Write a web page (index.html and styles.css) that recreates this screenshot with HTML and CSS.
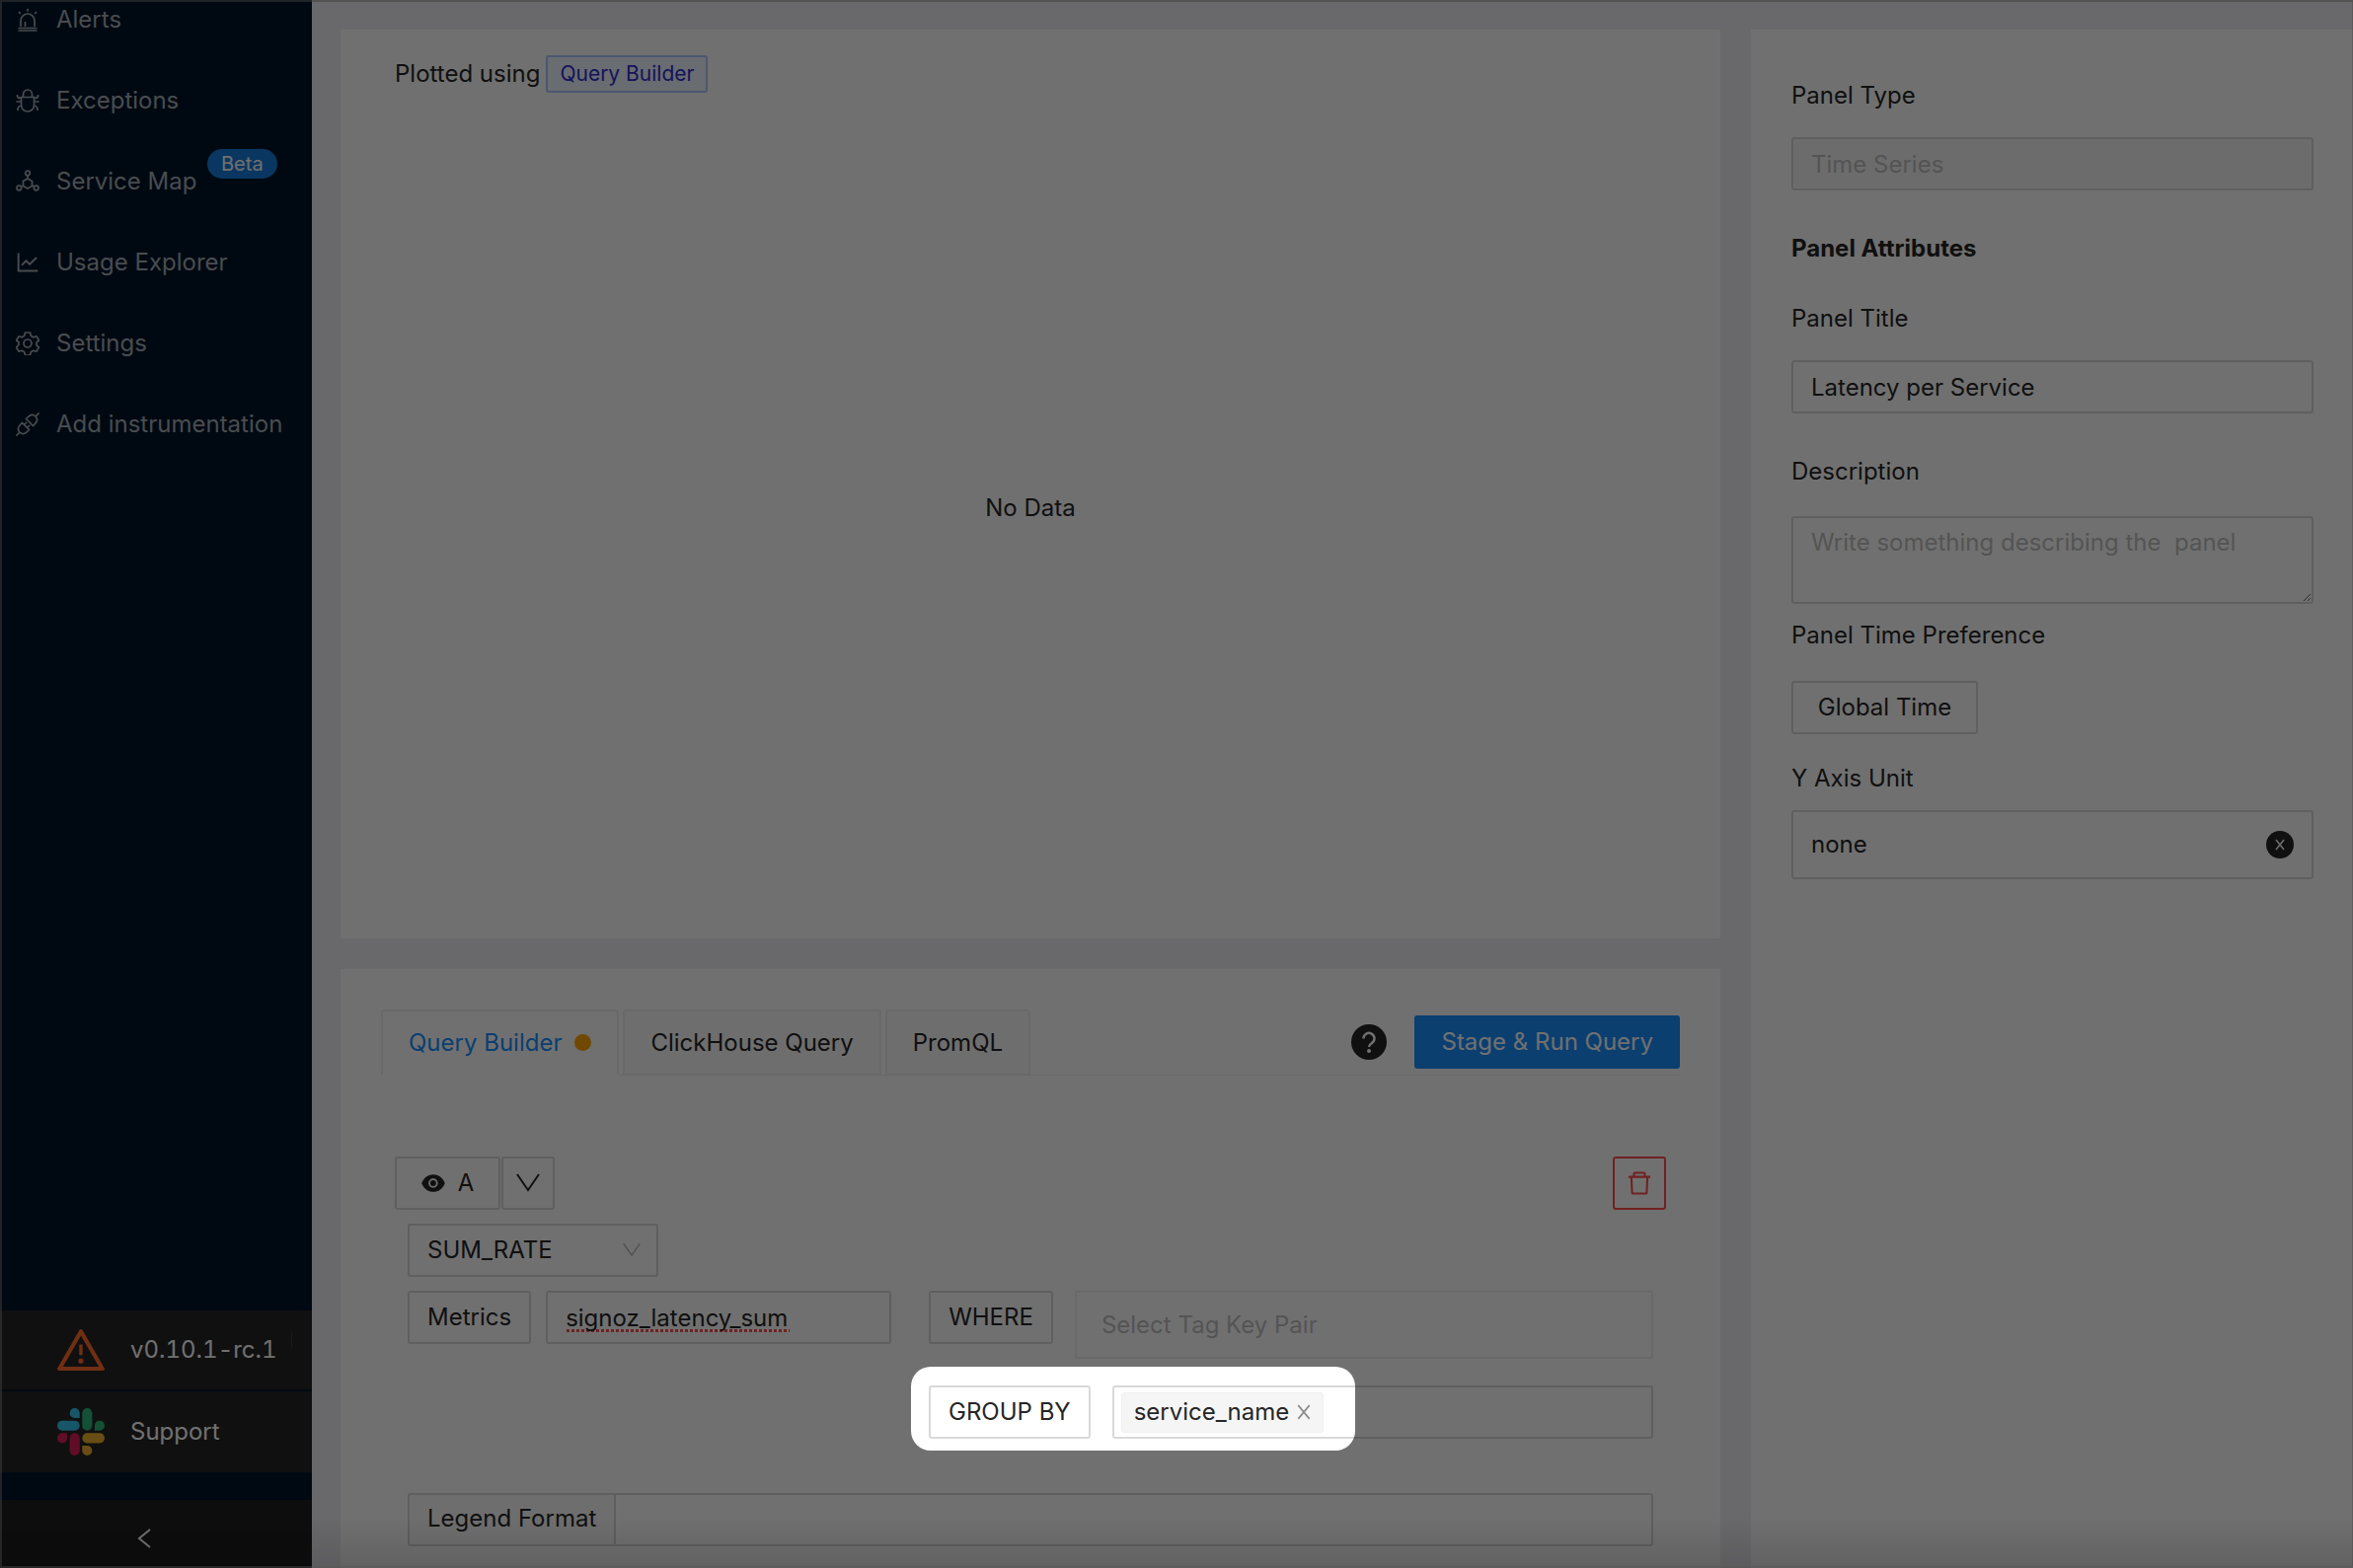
FILE: index.html
```html
<!DOCTYPE html>
<html lang="en">
<head>
<meta charset="utf-8">
<title>Edit panel</title>
<link rel="stylesheet" href="styles.css">
</head>
<body>
<div class="app">
  <aside class="sidebar">
    <nav class="nav">
      <a class="nav-item" href="#alerts">
        <svg class="nav-icon line" viewBox="0 0 24 24"><path d="M5 19v-6a7 7 0 0 1 14 0v6M2.500 20.500h19M2.500 23h19M9.500 19v-5M12 1v2.500M3 4l1.800 1.800M21 4l-1.800 1.800"/></svg>
        <span>Alerts</span>
      </a>
      <a class="nav-item" href="#exceptions">
        <svg class="nav-icon line" viewBox="0 0 24 24"><path d="M5.500 8.500h13v8a6.500 6.500 0 0 1-13 0zM7.500 8V5.500a4.500 4.500 0 0 1 9 0V8M0.500 13h5M18.500 13h5M1.500 6v1.500q0 2 4 2M22.500 6v1.500q0 2-4 2M2 22v-1.500q0-3 4-3.500M22 22v-1.500q0-3-4-3.500"/></svg>
        <span>Exceptions</span>
      </a>
      <a class="nav-item" href="#service-map">
        <svg class="nav-icon line" viewBox="0 0 24 24"><circle cx="12" cy="3.500" r="2.300"/><circle cx="3.300" cy="18.500" r="2.300"/><circle cx="20.700" cy="18.500" r="2.300"/><path d="M12 6v3M12 9l4.500 2.500v5L12 19l-4.500-2.500v-5zM7.500 16l-2.300 1.300M16.500 16l2.300 1.300"/></svg>
        <span>Service Map</span>
        <span class="badge">Beta</span>
      </a>
      <a class="nav-item" href="#usage">
        <svg class="nav-icon" viewBox="64 64 896 896"><path d="M888 792H200V168c0-4.400-3.600-8-8-8h-56c-4.400 0-8 3.600-8 8v688c0 4.400 3.600 8 8 8h752c4.400 0 8-3.600 8-8v-56c0-4.400-3.600-8-8-8zM305.800 637.700c3.100 3.100 8.100 3.100 11.300 0l138.300-137.600L583 628.500c3.100 3.100 8.200 3.100 11.300 0l275.400-275.300c3.100-3.100 3.100-8.200 0-11.300l-39.600-39.600a8.030 8.030 0 0 0-11.300 0l-230 229.900L461.400 404a8.030 8.030 0 0 0-11.300 0L266.300 586.700a8.030 8.030 0 0 0 0 11.300z"/></svg>
        <span>Usage Explorer</span>
      </a>
      <a class="nav-item" href="#settings">
        <svg class="nav-icon line" viewBox="0 0 24 24"><circle cx="12" cy="12" r="4"/><path d="M9.500 1h5l.8 3.300 2.500 1.500 3.200-1 2.400 4.200-2.400 2.200v2.600l2.400 2.200-2.400 4.200-3.200-1-2.500 1.500-.8 3.300h-5l-.8-3.300-2.500-1.500-3.200 1-2.400-4.200L3 13.300v-2.600L.600 9 3 4.800l3.200 1 2.500-1.500z" stroke-linejoin="round"/></svg>
        <span>Settings</span>
      </a>
      <a class="nav-item" href="#instrumentation">
        <svg class="nav-icon line" viewBox="0 0 24 24"><path d="M10.500 6.500l7 7 2-2q4-4 .5-7.500t-7.500.5zM20 4l3.500-3.500M6.500 10.500l7 7-2 2q-4 4-7.500.5t.5-7.500zM4 20l-3.500 3.500M8.500 12.500l2.500-2.500M11.500 15.500l2.500-2.500"/></svg>
        <span>Add instrumentation</span>
      </a>
    </nav>
    <div class="side-footer">
      <a class="foot-item" href="#version">
        <svg class="foot-icon warn" viewBox="64 64 896 896"><path d="M464 720a48 48 0 1 0 96 0 48 48 0 1 0-96 0zm16-304v184c0 4.400 3.600 8 8 8h48c4.400 0 8-3.600 8-8V416c0-4.400-3.600-8-8-8h-48c-4.400 0-8 3.600-8 8zm475.700 440l-416-720c-6.200-10.700-16.900-16-27.700-16s-21.600 5.300-27.700 16l-416 720C56 877.400 71.400 904 96 904h832c24.600 0 40-26.600 27.700-48zm-783.500-27.900L512 239.900l339.800 588.200H172.200z"/></svg>
        <span>v0.10.1-rc.1</span>
        <i class="mark"></i>
      </a>
      <a class="foot-item" href="#support">
        <svg class="foot-icon" viewBox="0 0 24 24"><path fill="#e01e5a" d="M5.042 15.165a2.528 2.528 0 0 1-2.520 2.523A2.528 2.528 0 0 1 0 15.165a2.527 2.527 0 0 1 2.522-2.520h2.520v2.520zM6.313 15.165a2.527 2.527 0 0 1 2.521-2.520 2.527 2.527 0 0 1 2.521 2.520v6.313A2.528 2.528 0 0 1 8.834 24a2.528 2.528 0 0 1-2.521-2.522v-6.313z"/><path fill="#36c5f0" d="M8.834 5.042a2.528 2.528 0 0 1-2.521-2.520A2.528 2.528 0 0 1 8.834 0a2.528 2.528 0 0 1 2.521 2.522v2.520H8.834zM8.834 6.313a2.528 2.528 0 0 1 2.521 2.521 2.528 2.528 0 0 1-2.521 2.521H2.522A2.528 2.528 0 0 1 0 8.834a2.528 2.528 0 0 1 2.522-2.521h6.312z"/><path fill="#2eb67d" d="M18.956 8.834a2.528 2.528 0 0 1 2.522-2.521A2.528 2.528 0 0 1 24 8.834a2.528 2.528 0 0 1-2.522 2.521h-2.522V8.834zM17.688 8.834a2.528 2.528 0 0 1-2.523 2.521 2.527 2.527 0 0 1-2.520-2.521V2.522A2.527 2.527 0 0 1 15.165 0a2.528 2.528 0 0 1 2.523 2.522v6.312z"/><path fill="#ecb22e" d="M15.165 18.956a2.528 2.528 0 0 1 2.523 2.522A2.528 2.528 0 0 1 15.165 24a2.527 2.527 0 0 1-2.520-2.522v-2.522h2.520zM15.165 17.688a2.527 2.527 0 0 1-2.520-2.523 2.526 2.526 0 0 1 2.520-2.520h6.313A2.527 2.527 0 0 1 24 15.165a2.528 2.528 0 0 1-2.522 2.523h-6.313z"/></svg>
        <span>Support</span>
      </a>
      <button class="collapse" type="button" aria-label="Collapse menu">
        <svg viewBox="0 0 14 20"><path d="M13 1L2 10l11 9"/></svg>
      </button>
    </div>
  </aside>

  <main class="main">
    <div class="work">
      <section class="card graph">
        <header class="plotted"><span>Plotted using</span><span class="chip">Query Builder</span></header>
        <p class="no-data">No Data</p>
      </section>

      <section class="card query">
        <div class="tabbar">
          <div class="tabs" role="tablist">
            <button class="tab active" type="button" role="tab" aria-selected="true">Query Builder<i class="dot"></i></button>
            <button class="tab" type="button" role="tab">ClickHouse Query</button>
            <button class="tab" type="button" role="tab">PromQL</button>
          </div>
          <div class="actions">
            <svg class="help" viewBox="0 0 36 36"><circle cx="18" cy="18" r="18" fill="#262626"/><path d="M12.500 14.500a5.500 5.500 0 1 1 8.500 4.500q-3 2-3 4" fill="none" stroke="#fff" stroke-width="2.500"/><circle cx="18" cy="27" r="2" fill="#fff"/></svg>
            <button class="primary" type="button">Stage &amp; Run Query</button>
          </div>
        </div>

        <form class="builder">
          <div class="row head">
            <div class="pair">
              <button class="btn name" type="button">
                <svg class="eye" viewBox="64 64 896 896"><path d="M396 512a112 112 0 1 0 224 0 112 112 0 1 0-224 0zm546.200-25.800C847.400 286.500 704.100 186 512 186c-192.200 0-335.400 100.500-430.200 300.300a60.300 60.300 0 0 0 0 51.500C176.600 737.500 319.900 838 512 838c192.200 0 335.400-100.500 430.200-300.300 7.700-16.200 7.700-35 0-51.500zM508 688c-97.200 0-176-78.800-176-176s78.800-176 176-176 176 78.800 176 176-78.800 176-176 176z"/></svg>
                A
              </button>
              <button class="btn toggle" type="button" aria-label="Collapse query">
                <svg class="down" viewBox="0 0 24 20"><path d="M1 1l11 16L23 1"/></svg>
              </button>
            </div>
            <button class="btn danger" type="button" aria-label="Delete query">
              <svg class="trash" viewBox="64 64 896 896"><path d="M360 184h304v72h72v-80c0-35.300-28.700-64-64-64H352c-35.300 0-64 28.700-64 64v80h72v-72zm504 72H160c-17.700 0-32 14.300-32 32v32c0 4.400 3.600 8 8 8h60.400l24.700 523c1.600 34.100 29.800 61 63.900 61h454c34.200 0 62.300-26.800 63.900-61l24.700-523H888c4.400 0 8-3.600 8-8v-32c0-17.700-14.300-32-32-32zM731.300 840H292.700l-24.200-512h487l-24.200 512z"/></svg>
            </button>
          </div>

          <div class="fields">
            <div class="aggregate">
              <select class="box" aria-label="Aggregate function"><option>SUM_RATE</option></select>
              <svg class="caret" viewBox="0 0 24 20"><path d="M1 1l11 16L23 1"/></svg>
            </div>
            <div class="row metric-row">
              <label class="box tagbox" for="metric">Metrics</label>
              <input class="box metric" id="metric" value="signoz_latency_sum">
              <label class="box tagbox" for="where">WHERE</label>
              <input class="where" id="where" placeholder="Select Tag Key Pair">
            </div>
            <div class="row group-row">
              <label class="box tagbox" for="group">GROUP BY</label>
              <div class="box multi">
                <span class="tag">service_name
                  <button class="tag-close" type="button" aria-label="Remove"><svg viewBox="0 0 12 14"><path d="M1 1l10 12M11 1L1 13"/></svg></button>
                </span>
                <input class="bare" id="group">
              </div>
              <div class="spotlight"></div>
            </div>
            <div class="row legend-row">
              <label class="box addon" for="legend">Legend Format</label>
              <input class="box legend" id="legend">
            </div>
          </div>
        </form>
      </section>
    </div>

    <section class="card settings">
      <label class="label" for="ptype">Panel Type</label>
      <input class="box" id="ptype" placeholder="Time Series" disabled>
      <h2 class="title">Panel Attributes</h2>
      <label class="label" for="ptitle">Panel Title</label>
      <input class="box" id="ptitle" value="Latency per Service">
      <label class="label spaced" for="pdesc">Description</label>
      <textarea class="box area" id="pdesc" placeholder="Write something describing the  panel"></textarea>
      <span class="label time">Panel Time Preference</span>
      <button class="btn global" type="button">Global Time</button>
      <label class="label unit" for="yunit">Y Axis Unit</label>
      <div class="box unit-box">
        <input class="bare" id="yunit" value="none">
        <button class="clear" type="button" aria-label="Clear"><svg viewBox="0 0 28 28"><circle cx="14" cy="14" r="14" fill="#262626"/><path d="M10 9l8 10M18 9l-8 10" stroke="#fff" stroke-width="1.500"/></svg></button>
      </div>
    </section>
  </main>
</div>
</body>
</html>
```

FILE: styles.css
```css
* { box-sizing: border-box; }

body {
  margin: 0;
  font: 24px/38px Inter, "Liberation Sans", sans-serif;
  color: #262626;
  background: #f0f0f3;
}

button, input, select, textarea { font: inherit; color: inherit; margin: 0; }
button { cursor: pointer; }
svg { display: block; }
a { color: inherit; text-decoration: none; }

.app {
  display: flex;
  height: 100vh;
  overflow: hidden;
  position: relative;
}

/* window edge */
.app::after {
  content: "";
  position: absolute;
  inset: 0;
  z-index: 20;
  pointer-events: none;
  border: 2px solid rgba(70, 70, 70, .45);
  border-right-width: 1px;
  background: linear-gradient(to top, rgba(0, 0, 0, .12), transparent 50px);
}

/* sidebar */
.sidebar {
  flex: 0 0 316px;
  display: flex;
  flex-direction: column;
  justify-content: space-between;
  background: #001529;
  color: #a6adb4;
}

.nav { margin-top: -21px; }

.nav-item {
  display: flex;
  align-items: center;
  height: 82px;
  padding-left: 16px;
  gap: 17px;
  position: relative;
}

.nav-icon { width: 24px; height: 24px; fill: currentColor; }
.nav-icon.line { fill: none; stroke: currentColor; stroke-width: 1.700; }

.badge {
  position: absolute;
  left: 210px;
  top: 8px;
  padding: 0 14px;
  border-radius: 15px;
  background: #177ddc;
  color: #fff;
  font-size: 20px;
  line-height: 30px;
}

.foot-item {
  display: flex;
  align-items: center;
  height: 82px;
  padding-left: 58px;
  gap: 26px;
  background: #262626;
  color: #fff;
  font-variant-numeric: tabular-nums;
  white-space: nowrap;
}

.foot-item:first-child { border-bottom: 2px solid #001529; }
.foot-icon { flex: none; width: 48px; height: 48px; }
.warn { fill: #ff6b2c; }
.mark { flex: none; width: 1px; height: 18px; margin: -20px 0 0 -12px; background: #a8071a; }

.collapse {
  display: flex;
  align-items: center;
  justify-content: center;
  width: 100%;
  height: 69px;
  margin-top: 28px;
  padding: 8px 24px 0 0;
  border: 0;
  background: #1f1f1f;
}

.collapse svg { width: 14px; height: 20px; fill: none; stroke: #fff; stroke-width: 2; }

/* content */
.main {
  flex: 1;
  min-width: 0;
  display: grid;
  grid-template-columns: minmax(0, 1fr) 610px;
  gap: 31px;
  padding: 30px 0 0 29px;
}

.work { display: flex; flex-direction: column; gap: 31px; min-height: 0; }
.card { background: #fff; }

.graph { flex: 0 0 921px; padding: 26px 55px; }
.plotted { display: flex; align-items: center; gap: 6px; }

.chip {
  border: 2px solid #adc6ff;
  border-radius: 3px;
  background: #f0f5ff;
  color: #2f2fd0;
  padding: 0 12px;
  font-size: 21px;
  line-height: 34px;
}

.no-data { margin: 402px 0 0; text-align: center; }

.query { flex: 1 0 auto; padding: 41px 41px 22px; }

.tabbar {
  display: flex;
  justify-content: space-between;
  height: 67px;
  border-bottom: 1px solid #f0f0f0;
}

.tabs { display: flex; gap: 4px; }

.tab {
  display: flex;
  align-items: center;
  height: 67px;
  padding: 0 26px;
  border: 2px solid #f0f0f0;
  border-radius: 3px 3px 0 0;
  background: #fafafa;
}

.tab.active { background: #fff; border-bottom-color: #fff; color: #1890ff; }
.dot { width: 17px; height: 17px; margin-left: 13px; border-radius: 50%; background: #ffa500; }

.actions { display: flex; align-items: center; gap: 28px; }
.help { width: 36px; height: 36px; }

.primary {
  height: 54px;
  padding: 0 27px;
  border: 0;
  border-radius: 3px;
  background: #1890ff;
  color: #fff;
}

.builder { padding: 82px 14px 0; }
.row { display: flex; align-items: flex-start; }
.head { justify-content: space-between; }
.pair { display: flex; gap: 1px; }

.box, .btn {
  height: 54px;
  border: 2px solid #d9d9d9;
  border-radius: 3px;
  background: #fff;
}

.btn { display: flex; align-items: center; justify-content: center; padding: 0; }
.name { width: 107px; gap: 13px; }
.toggle, .danger { width: 54px; }
.danger { border-color: #ff4d4f; }
.eye { width: 24px; height: 24px; fill: #262626; }
.down, .caret { fill: none; stroke: #262626; stroke-width: 2; }
.down { width: 24px; height: 20px; }
.trash { width: 26px; height: 26px; fill: #ff4d4f; }

.fields { padding: 14px 13px 0; }

.aggregate { position: relative; width: 254px; }
.aggregate select { width: 100%; padding: 0 18px; appearance: none; }
.caret { position: absolute; right: 18px; top: 19px; width: 18px; height: 16px; stroke: #bfbfbf; }

.tagbox { flex: none; padding: 0 18px; line-height: 50px; }
.metric-row { margin-top: 14px; }

.metric {
  width: 350px;
  margin: 0 38px 0 15px;
  padding: 0 18px;
  /* spell-check dots under the word */
  background: #fff repeating-linear-gradient(to right, #ff4d4f 0 3px, transparent 3px 5px) 19px 37px / 226px 3px no-repeat;
}

.where {
  flex: 1;
  min-width: 0;
  height: 69px;
  margin-left: 22px;
  padding: 0 25px;
  border: 2px solid #f0f0f0;
  background: #fff;
}

::placeholder { color: #bfbfbf; opacity: 1; }

.group-row { position: relative; margin: 27px 0 0 528px; }

.multi {
  flex: 1;
  min-width: 0;
  display: flex;
  align-items: center;
  margin-left: 22px;
  padding: 0 7px;
}

.tag {
  display: flex;
  align-items: center;
  gap: 8px;
  height: 41px;
  padding: 0 12px;
  border: 1px solid #f0f0f0;
  border-radius: 3px;
  background: #f5f5f5;
}

.tag-close { padding: 0; border: 0; background: none; }
.tag-close svg { width: 14px; height: 16px; fill: none; stroke: #8c8c8c; stroke-width: 1.500; }
.bare { flex: 1; min-width: 0; padding: 0; border: 0; background: none; outline: 0; }

/* tour highlight: dims all but the group-by control */
.spotlight {
  position: absolute;
  left: -18px;
  top: -19px;
  width: 450px;
  height: 85px;
  z-index: 10;
  border-radius: 20px;
  box-shadow: 0 0 0 3000px rgba(0, 0, 0, .56);
  pointer-events: none;
}

.legend-row { margin-top: 55px; }
.addon { flex: none; padding: 0 18px; line-height: 48px; border-right: 0; border-radius: 3px 0 0 3px; background: #fafafa; }
.legend { flex: 1; min-width: 0; border-radius: 0 3px 3px 0; }

/* panel settings */
.settings { display: flex; flex-direction: column; padding: 48px 40px 0 41px; }
.label { margin-bottom: 23px; }
.title { margin: 40px 0 33px; font-size: 24px; line-height: 38px; font-weight: 700; }
.settings > .box { flex: none; padding: 0 18px; }
.settings > .box:disabled { background: #f5f5f5; }
.spaced { margin: 40px 0 26px; }
.settings > .area { height: 89px; padding: 6px 18px; resize: vertical; }
.time { margin-top: 13px; }
.global { width: 189px; flex: none; margin-top: 4px; }
.unit { margin: 26px 0 13px; }
.settings > .unit-box { display: flex; align-items: center; height: 70px; }
.clear { padding: 0; border: 0; background: none; }
.clear svg { width: 28px; height: 28px; fill: none; }
```
